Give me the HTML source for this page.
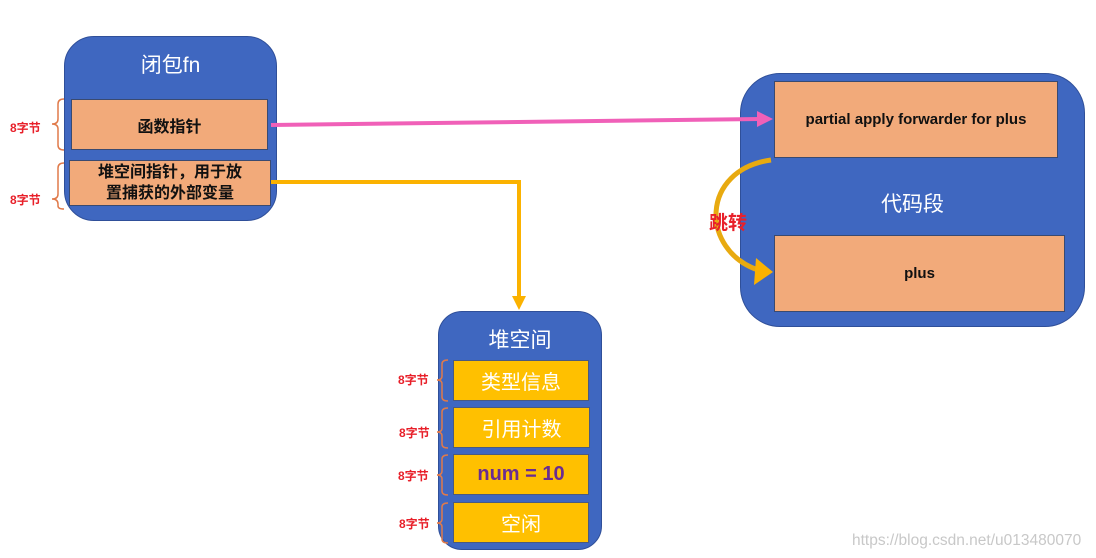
<!DOCTYPE html>
<html><head><meta charset="utf-8"><style>
body{margin:0;background:#fff;width:1096px;height:558px;overflow:hidden;position:relative;font-family:"Liberation Sans","Noto Sans CJK SC",sans-serif}
.a{position:absolute;box-sizing:border-box}
.big{background:#3f67c0;border:1px solid #2f4f99}
.or{background:#f2aa7a;border:1px solid #3a4a70;display:flex;align-items:center;justify-content:center;text-align:center;font-weight:bold;color:#111}
.gd{background:#ffc000;border:1px solid #4a5a80;display:flex;align-items:center;justify-content:center;color:#fff;font-size:20px}
.t{color:#fff;text-align:center;font-size:21px}
.l{color:#e8202a;font-weight:bold;font-size:12px}
</style></head><body>
<div class="a big" style="left:64px;top:36px;width:213px;height:185px;border-radius:30px"></div>
<div class="a t" style="left:64px;top:49px;width:213px">闭包fn</div>
<div class="a or" style="left:71px;top:99px;width:197px;height:51px;font-size:16px">函数指针</div>
<div class="a or" style="left:69px;top:160px;width:202px;height:46px;font-size:16px;line-height:21px">堆空间指针，用于放<br>置捕获的外部变量</div>
<div class="a l" style="left:10px;top:119px">8字节</div>
<div class="a l" style="left:10px;top:191px">8字节</div>

<div class="a big" style="left:438px;top:311px;width:164px;height:239px;border-radius:24px"></div>
<div class="a t" style="left:438px;top:324px;width:164px">堆空间</div>
<div class="a gd" style="left:453px;top:360px;width:136px;height:41px">类型信息</div>
<div class="a gd" style="left:453px;top:407px;width:137px;height:41px">引用计数</div>
<div class="a gd" style="left:453px;top:454px;width:136px;height:41px;color:#6a2c91;font-weight:bold">num = 10</div>
<div class="a gd" style="left:453px;top:502px;width:136px;height:41px">空闲</div>
<div class="a l" style="left:398px;top:371px">8字节</div>
<div class="a l" style="left:399px;top:424px">8字节</div>
<div class="a l" style="left:398px;top:467px">8字节</div>
<div class="a l" style="left:399px;top:515px">8字节</div>

<div class="a big" style="left:740px;top:73px;width:345px;height:254px;border-radius:40px"></div>
<div class="a or" style="left:774px;top:81px;width:284px;height:77px;font-size:15px">partial apply forwarder for plus</div>
<div class="a t" style="left:740px;top:188px;width:345px">代码段</div>
<div class="a or" style="left:774px;top:235px;width:291px;height:77px;font-size:15px">plus</div>

<svg class="a" style="left:0;top:0" width="1096" height="558">
<g fill="none" stroke="#e07a4a" stroke-width="1.5">
<path d="M64 99 Q58 99 58 104 V119 Q58 124 52 124 Q58 124 58 129 V145 Q58 150 64 150"/>
<path d="M64 163 Q58 163 58 168 V194 Q58 199 52 199 Q58 199 58 204 V206 Q58 209 64 209"/>
<path d="M448 360 Q442 360 442 364 V376 Q442 380 437 380 Q442 380 442 384 V397 Q442 401 448 401"/>
<path d="M448 408 Q442 408 442 412 V428 Q442 432 437 432 Q442 432 442 436 V444 Q442 448 448 448"/>
<path d="M448 455 Q442 455 442 459 V471 Q442 475 437 475 Q442 475 442 479 V491 Q442 495 448 495"/>
<path d="M448 503 Q442 503 442 507 V519 Q442 523 437 523 Q442 523 442 527 V539 Q442 543 448 543"/>
</g>
<path d="M271 125 L760 119" stroke="#f060b8" stroke-width="4" fill="none"/>
<path d="M757 111 L773 119 L757 127 Z" fill="#f060b8"/>
<path d="M271 182 H519 V298" stroke="#fbb200" stroke-width="4" fill="none"/>
<path d="M512 296 L519 310 L526 296 Z" fill="#fbb200"/>
<path d="M771 160 C700 170 700 250 758 270" stroke="#e8aa10" stroke-width="5" fill="none"/>
<path d="M756 258 L773 272 L754 285 Z" fill="#fbb200"/>
<text x="709" y="229" fill="#e8202a" font-size="19" font-weight="bold" font-family="Liberation Sans,Noto Sans CJK SC,sans-serif">跳转</text>
<text x="852" y="545" fill="#c8c8c8" font-size="15.5" font-family="Liberation Sans,sans-serif">https://blog.csdn.net/u013480070</text>
</svg>
</body></html>
